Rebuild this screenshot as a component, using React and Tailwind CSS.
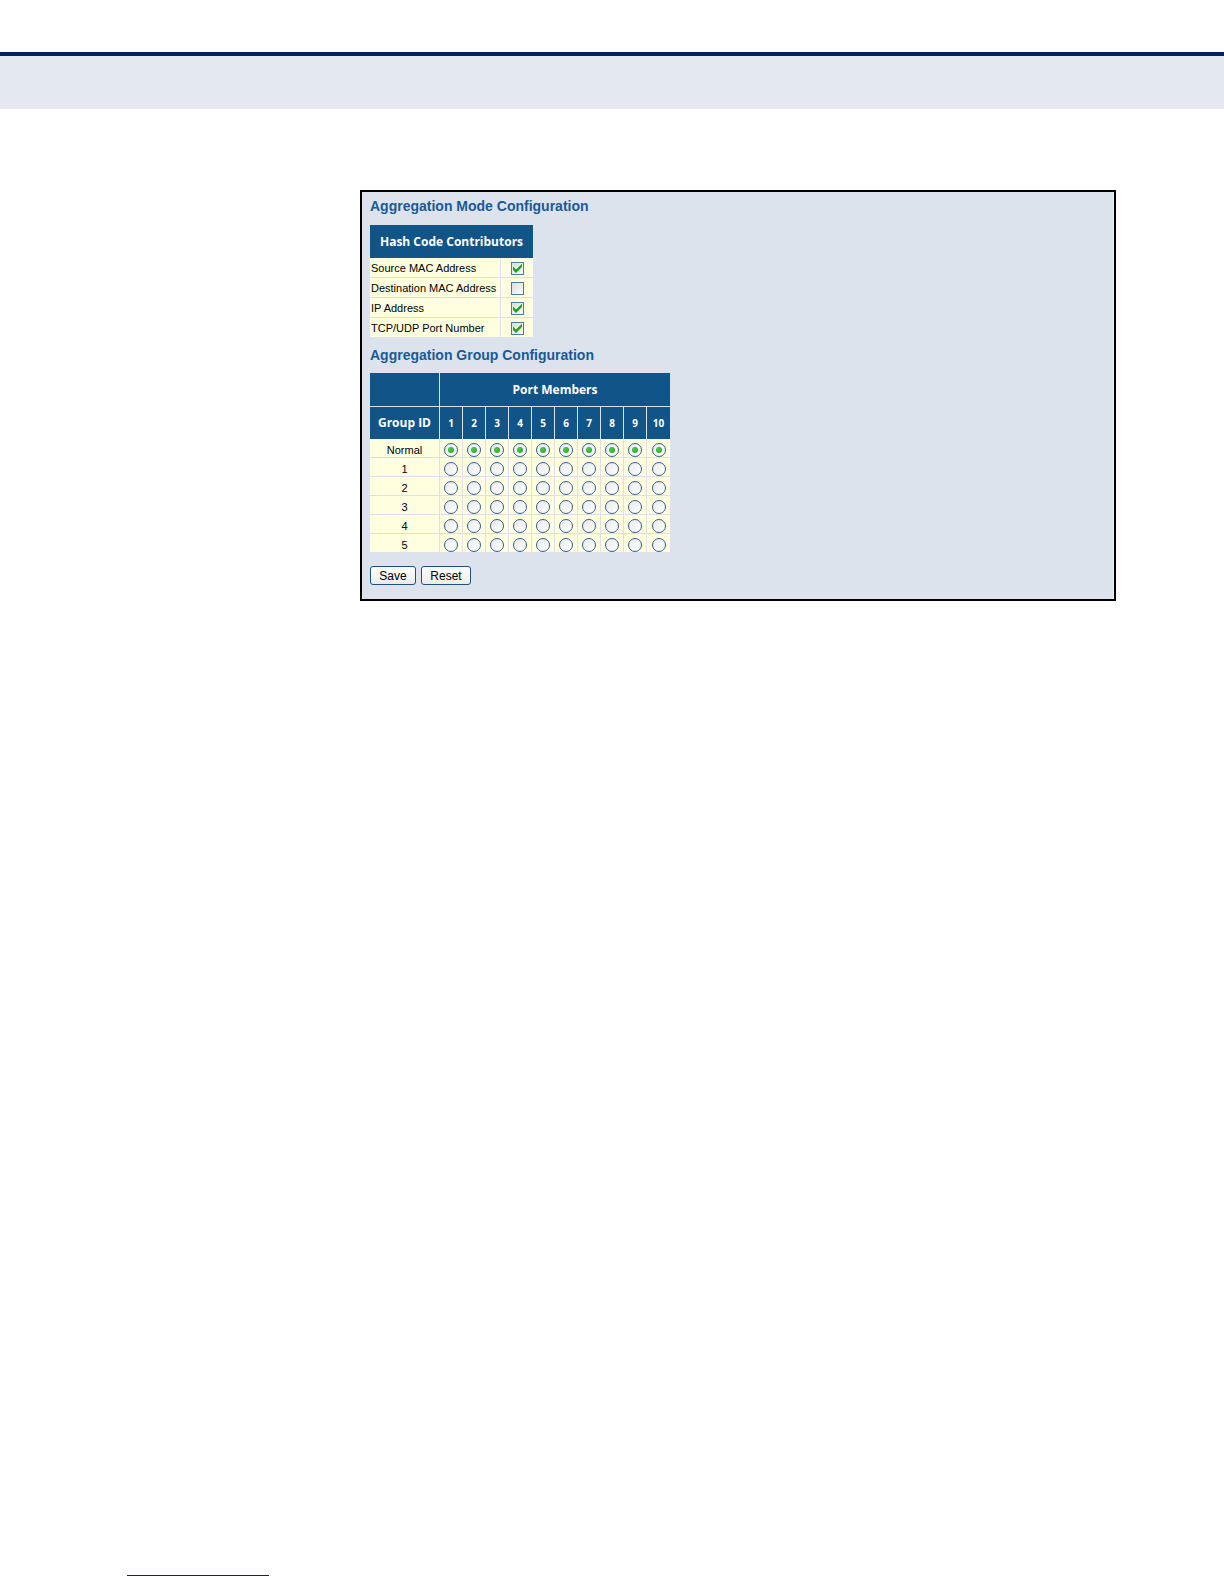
import { useState } from "react"
import { clsx } from "clsx"

const contributors = [
  { id: "smac", label: "Source MAC Address", checked: true },
  { id: "dmac", label: "Destination MAC Address", checked: false },
  { id: "ip", label: "IP Address", checked: true },
  { id: "port", label: "TCP/UDP Port Number", checked: true },
]

const ports = [1, 2, 3, 4, 5, 6, 7, 8, 9, 10]
const groups = ["Normal", "1", "2", "3", "4", "5"]

function SectionTitle({ children }) {
  return (
    <h2 className="font-['Liberation_Sans',Arial,sans-serif] text-[14px] leading-5 font-bold text-[#1a5a96]">
      {children}
    </h2>
  )
}

function CheckBox({ id, checked, onChange }) {
  return (
    <span className="relative mx-auto block h-[13px] w-[13px]">
      <input
        id={id}
        type="checkbox"
        checked={checked}
        onChange={onChange}
        className="block h-[13px] w-[13px] appearance-none border border-[#4a7ba0] bg-linear-to-br from-[#dcdfdc] to-[#fbfbf8]"
      />
      {checked && (
        <svg viewBox="0 0 13 13" className="pointer-events-none absolute inset-0 h-[13px] w-[13px]">
          <path d="M2 4.5v3.5l3 3 6-6V1.8L5 7.6z" fill="#21a121" />
        </svg>
      )}
    </span>
  )
}

function Radio({ name, label, checked, onChange }) {
  return (
    <span className="relative mx-auto block h-[14px] w-[14px]">
      <input
        type="radio"
        name={name}
        aria-label={label}
        checked={checked}
        onChange={onChange}
        className="block h-[14px] w-[14px] appearance-none rounded-full border border-[#2f5f8a] bg-linear-to-br from-[#e9e9ec] to-white"
      />
      {checked && (
        <span className="pointer-events-none absolute inset-[4px] rounded-full bg-radial-[at_35%_35%] from-[#4fcb4a] to-[#22a022]"></span>
      )}
    </span>
  )
}

function ModeTable() {
  const [checked, setChecked] = useState(
    Object.fromEntries(contributors.map((c) => [c.id, c.checked]))
  )

  return (
    <table className="w-[163px] table-fixed border-separate border-spacing-0 bg-[#ffffe0]">
      <colgroup>
        <col className="w-[131px]" />
        <col />
      </colgroup>
      <thead>
        <tr>
          <th
            colSpan={2}
            className="h-[33px] bg-[#115488] p-0 text-center font-['Open_Sans',sans-serif] text-[12px] leading-4 font-bold whitespace-nowrap text-white"
          >
            Hash Code Contributors
          </th>
        </tr>
      </thead>
      <tbody>
        {contributors.map((c, i) => {
          const line = i < contributors.length - 1 && "border-b"
          return (
            <tr key={c.id}>
              <td className={clsx("border-r border-[#dcdfe4] p-0 pt-[2px] pl-px whitespace-nowrap", line)}>
                <label htmlFor={c.id} className="block h-[17px] text-[11px] leading-[17px]">
                  {c.label}
                </label>
              </td>
              <td className={clsx("border-[#dcdfe4] p-0 pt-px", line)}>
                <CheckBox
                  id={c.id}
                  checked={checked[c.id]}
                  onChange={() => setChecked({ ...checked, [c.id]: !checked[c.id] })}
                />
              </td>
            </tr>
          )
        })}
      </tbody>
    </table>
  )
}

function GroupTable() {
  const [members, setMembers] = useState(
    Object.fromEntries(ports.map((p) => [p, "Normal"]))
  )

  return (
    <table className="w-[300px] table-fixed border-separate border-spacing-0 bg-[#ffffe0] text-center">
      <colgroup>
        <col className="w-[70px]" />
        <col span={10} className="w-[23px]" />
      </colgroup>
      <thead className="bg-[#115488] font-['Open_Sans',sans-serif] text-white">
        <tr>
          <th className="h-[34px] border-r border-b border-[#d5e3ee] p-0"></th>
          <th colSpan={10} className="border-b border-[#d5e3ee] p-0 text-[12px] leading-4 font-bold">
            Port Members
          </th>
        </tr>
        <tr>
          <th className="h-[32px] border-r border-[#d5e3ee] p-0 text-[12px] leading-4 font-bold whitespace-nowrap">
            Group ID
          </th>
          {ports.map((p) => (
            <th
              key={p}
              className={clsx("border-[#d5e3ee] p-0 text-[10px] leading-4 font-bold", p < 10 && "border-r")}
            >
              {p}
            </th>
          ))}
        </tr>
      </thead>
      <tbody>
        {groups.map((g, i) => {
          const line = i < groups.length - 1 && "border-b"
          return (
            <tr key={g}>
              <td className={clsx("border-r border-[#dcdfe4] p-0 pt-[3px]", line)}>
                <span className="block h-[15px] text-[11px] leading-4">{g}</span>
              </td>
              {ports.map((p) => (
                <td key={p} className={clsx("border-[#dcdfe4] p-0 pt-1", line, p < 10 && "border-r")}>
                  <Radio
                    name={`port-${p}`}
                    label={`Port ${p}, group ${g}`}
                    checked={members[p] === g}
                    onChange={() => setMembers({ ...members, [p]: g })}
                  />
                </td>
              ))}
            </tr>
          )
        })}
      </tbody>
    </table>
  )
}

function FormButton({ children, type, className }) {
  return (
    <button
      type={type}
      className={clsx(
        "h-[19px] rounded-[3px] border border-[#1c5180] bg-linear-to-b from-white to-[#ecebe6] text-[12px] leading-4",
        className
      )}
    >
      {children}
    </button>
  )
}

export default function App() {
  return (
    <div className="flex min-h-screen flex-col bg-white font-['Liberation_Sans',Arial,sans-serif] text-black">
      <header className="mt-[52px] h-[57px] border-t-4 border-[#04205f] bg-[#e4e8ef]"></header>

      <main className="mt-[81px] mr-[108px] ml-[360px]">
        <form
          onSubmit={(e) => e.preventDefault()}
          className="border-2 border-black bg-[#dce3ec] px-2 pt-1 pb-[14px] shadow-[inset_-1px_0_0_#f4f6f9]"
        >
          <SectionTitle>Aggregation Mode Configuration</SectionTitle>
          <div className="mt-[9px]">
            <ModeTable />
          </div>
          <div className="mt-2">
            <SectionTitle>Aggregation Group Configuration</SectionTitle>
          </div>
          <div className="mt-2">
            <GroupTable />
          </div>
          <div className="mt-[14px] flex gap-[5px]">
            <FormButton type="submit" className="w-[46px]">Save</FormButton>
            <FormButton type="reset" className="w-[50px]">Reset</FormButton>
          </div>
        </form>
      </main>

      <footer className="mt-auto mb-2 ml-[127px] w-[142px] border-t border-[#15158c]"></footer>
    </div>
  )
}
